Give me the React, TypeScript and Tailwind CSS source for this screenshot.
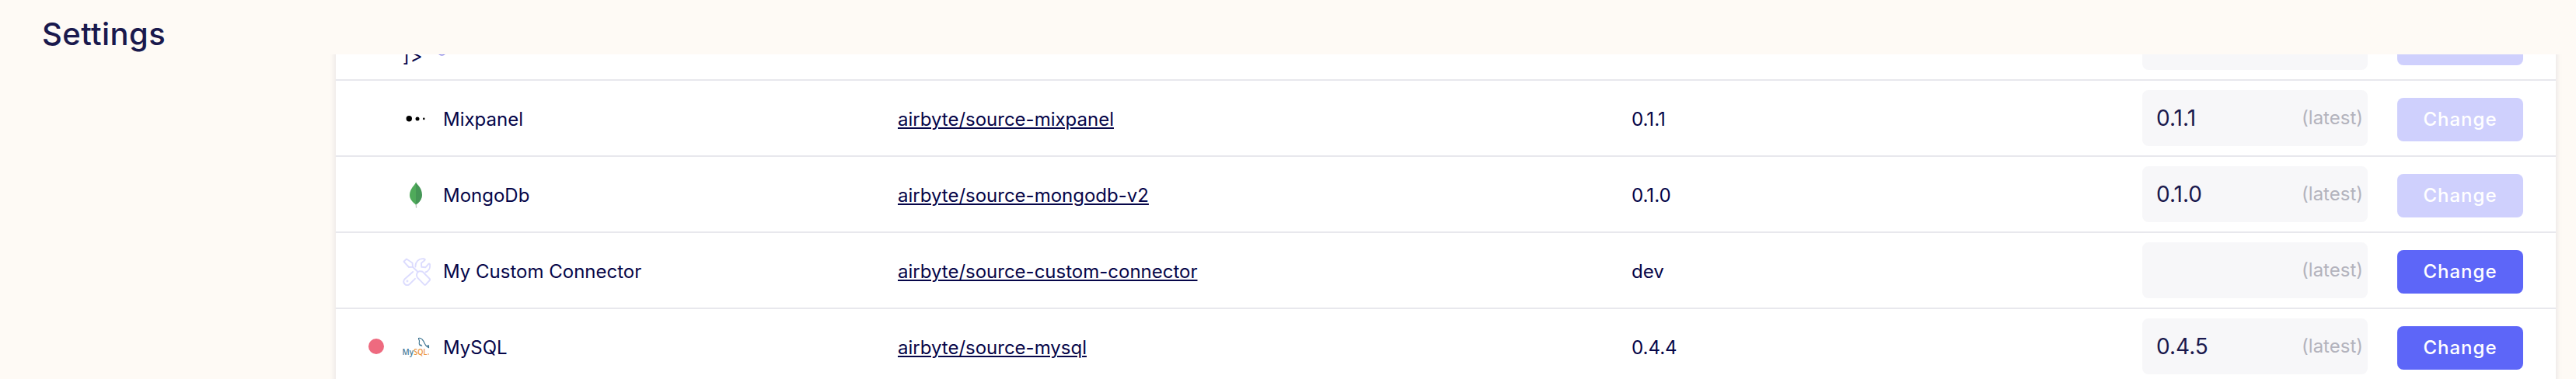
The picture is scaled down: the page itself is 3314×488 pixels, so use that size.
import type { ReactNode } from "react";

type Row = {
  name: ReactNode;
  icon: ReactNode;
  image: string;
  version: string;
  next?: string;
  enabled?: boolean;
  update?: boolean;
};

const BrokenIcon = () => (
  <span className="block w-full pt-[19px] text-[24px] leading-[29px] tracking-[1px]">]&gt;</span>
);

const ArcMark = () => (
  <svg className="-ml-[6px]" width="10" height="36" viewBox="0 0 10 36" fill="none" stroke="#8b88e6" strokeWidth="1.5">
    <path d="M.5 31.500Q4.500 34.500 8.500 31.500" />
  </svg>
);

const MixpanelIcon = () => (
  <svg width="36" height="36" viewBox="0 0 36 36">
    <circle cx="8.300" cy="16.800" r="3.700" />
    <circle cx="19" cy="17" r="2.500" />
    <circle cx="27.300" cy="16.900" r="1.300" />
  </svg>
);

const MongoIcon = () => (
  <svg width="36" height="36" viewBox="0 0 36 36">
    <path d="M16.600 27h.9l.5 6.500h-.9z" fill="#b3bcb6" stroke="#b3bcb6" strokeWidth=".3" />
    <path d="M17 .3C17.600 3.300 25 7 25 17c0 6-3.600 9.700-7.500 12.500L17 28z" fill="#459656" />
    <path d="M17.100 .3C16.500 4 9 8.500 9 17.300c0 5.500 3.900 9.200 8 12.200z" fill="#4faa5a" />
  </svg>
);

const ToolsIcon = () => (
  <svg
    width="36"
    height="36"
    viewBox="0 0 36 36"
    fill="none"
    stroke="#dcdcfe"
    strokeWidth="1.9"
    strokeLinejoin="round"
    strokeLinecap="round"
  >
    <path d="M1.500 4.800 5 1.500 12.500 6.500 13 11.700 8 12z" />
    <path d="M13 11.700 19.500 18" />
    <path d="M18.700 19.500c.8-1.700 2.500-2.600 4-2.200l3 .5 9 9.200c.7.700.7 1.300 0 2l-5 5.300c-.7.700-1.300.7-2 0l-8.500-8.600c-1.200-1.600-1.400-4.200-.5-6.200z" />
    <path d="M16.500 11.500C16 5.500 20.500 .5 27 1.200c2 .3 2.200 1.200 1.300 2L24 6.800l.3 5 5 .5 4-4.500c.7-.6 1.500-.3 1.700.6.800 4.600-1.500 8.700-5.500 10.100" />
    <path d="M13.200 18 2.500 27.500C-1 32 4.500 37.500 8.800 34L16 26.800" />
    <circle cx="6" cy="30" r=".5" />
  </svg>
);

const MySqlIcon = () => (
  <svg width="36" height="36" viewBox="0 0 36 36">
    <g fill="none" stroke="#38718f" strokeWidth="1.1" strokeLinecap="round" strokeLinejoin="round">
      <path d="M20.500 5.500c2.200-.7 3.500.3 4.600 1.500 3.400 3.500 3.400 8 5.900 9l2.600 1.700M30.500 15.500l3-.8M33.500 14.700v3" />
      <path d="M20.500 5.500c-.2 1.400.8 2 1 3.300.1 2-.9 3.300.3 5.200l.8 1 .6-1.200 1.500 1.500" />
    </g>
    <g fontFamily="Open Sans, sans-serif" fontSize="11.500" fontWeight="600">
      <text x="-.5" y="26.500" textLength="14.500" lengthAdjust="spacingAndGlyphs" fill="#4a7d9a">
        My
      </text>
      <text x="14.200" y="26.500" textLength="17.300" lengthAdjust="spacingAndGlyphs" fill="#ec9440">
        SQL
      </text>
    </g>
    <path d="M32.300 26h1.700" stroke="#ec9440" />
  </svg>
);

const rows: Row[] = [
  { name: <ArcMark />, icon: <BrokenIcon />, image: "", version: "" },
  { name: "Mixpanel", icon: <MixpanelIcon />, image: "airbyte/source-mixpanel", version: "0.1.1", next: "0.1.1" },
  { name: "MongoDb", icon: <MongoIcon />, image: "airbyte/source-mongodb-v2", version: "0.1.0", next: "0.1.0" },
  { name: "My Custom Connector", icon: <ToolsIcon />, image: "airbyte/source-custom-connector", version: "dev", next: "", enabled: true },
  { name: "MySQL", icon: <MySqlIcon />, image: "airbyte/source-mysql", version: "0.4.4", next: "0.4.5", enabled: true, update: true },
];

function ConnectorRow({ row }: { row: Row }) {
  const filled = row.next !== undefined;
  return (
    <div className="flex h-[98px] shrink-0 items-center border-b-2 border-[#e8e8ed] pr-[42px] text-[24px] leading-[30px] text-[#060649]">
      <div className="flex w-[723px] items-center pt-1 pl-[42px]">
        <span className={row.update ? "mb-1 size-5 rounded-full bg-[#ee6a7f]" : "size-5"} />
        <span className="ml-6 block h-9 w-9">{row.icon}</span>
        <span className="ml-4 whitespace-nowrap">{row.name}</span>
      </div>
      <div className="w-[944px] pt-[3px]">
        <a className="underline decoration-2 underline-offset-[2px]">{row.image}</a>
      </div>
      <div className="flex-1 pt-[3px]">{row.version}</div>
      <div className="flex h-[72px] w-[290px] items-center justify-between rounded-lg bg-[#f7f7f9] pr-[6px] pl-[18px]">
        <span className="text-[28px] text-[#1a194d]">{row.next}</span>
        {filled && <span className="text-[#b3b3bd]">(latest)</span>}
      </div>
      <button
        className={
          row.enabled
            ? "mt-1 ml-[38px] h-14 w-[162px] rounded-lg bg-[#5d66f8] font-medium tracking-[1px] text-white"
            : "mt-1 ml-[38px] h-14 w-[162px] rounded-lg bg-[#cfd0fd] font-medium tracking-[1px] text-white"
        }
      >
        {filled && "Change"}
      </button>
    </div>
  );
}

export default function App() {
  return (
    <div className="flex h-[488px] w-[3314px] flex-col overflow-hidden bg-[#fefaf5] font-[Inter,sans-serif]">
      <header className="h-[70px] shrink-0 pt-[20px] pl-[54px]">
        <h1 className="text-[40px] leading-[48px] font-medium tracking-[0.4px] text-[#1a194d]">Settings</h1>
      </header>
      <main className="flex h-[418px] flex-col overflow-hidden pr-[26px] pl-[432px]">
        <div className="-mt-16 flex h-[500px] shrink-0 flex-col bg-white shadow-[0_4px_8px_rgba(26,25,77,0.12)]">
          {rows.map((row, i) => (
            <ConnectorRow key={i} row={row} />
          ))}
        </div>
      </main>
    </div>
  );
}
